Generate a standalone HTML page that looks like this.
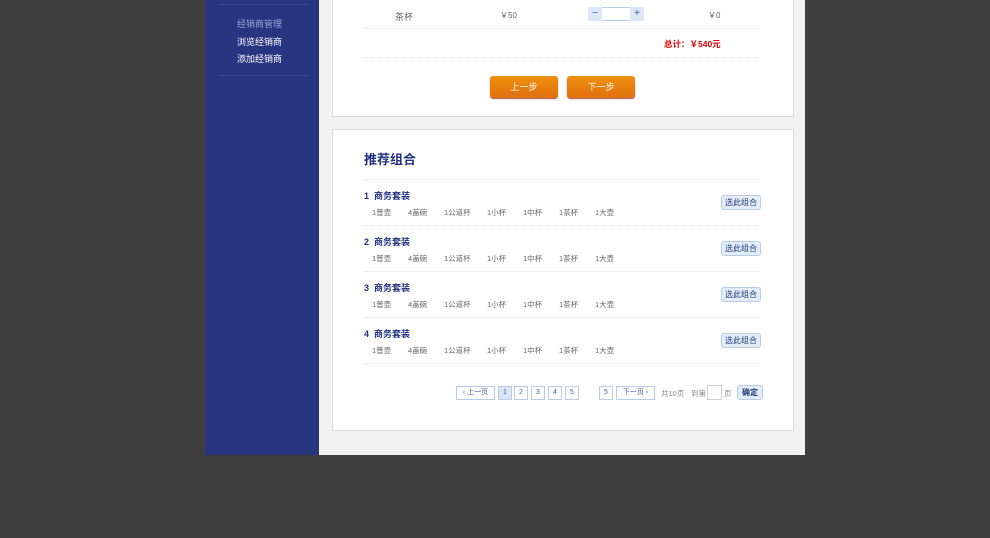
<!DOCTYPE html>
<html><head><meta charset="utf-8"><style>
*{margin:0;padding:0;box-sizing:border-box}
body{width:990px;height:538px;background:#3e3e3e;position:relative;overflow:hidden;font-family:"Liberation Sans","Noto Sans CJK SC",sans-serif;font-size:9px;color:#666}
.a{position:absolute;white-space:nowrap}
#side{left:205px;top:0;width:114px;height:455px;background:#283581}
#main{left:319px;top:0;width:486px;height:455px;background:#f2f2f2}
.panel{position:absolute;background:#fff;border:1px solid #dcdcdc}
.hl{position:absolute;height:0;border-top:1px dotted #e2e2e2}
.btn{position:absolute;width:68px;height:22px;border-radius:3px;background:linear-gradient(#f0900e,#e0700f);color:#fff;font-size:9px;text-align:center;line-height:22px;box-shadow:0 1px 1px #a55}
.sel{position:absolute;left:721px;width:40px;height:15px;border:1px solid #b9cbe6;border-radius:3px;background:#e3ecf9;color:#223a7a;font-size:8px;text-align:center;line-height:13px}
.pg{position:absolute;top:386px;height:14px;border:1px solid #b9cbe6;color:#4060a0;font-size:7px;text-align:center;line-height:12px;background:#fff}
.t{color:#1f2e80;font-weight:bold;font-size:9px}
.row{position:absolute;left:0;width:990px;height:10px}
.row span{position:absolute;font-size:7.5px;color:#666;white-space:nowrap}
</style></head><body>
<div class="a" id="side"></div>
<div class="hl" style="left:218px;top:4px;width:90px;border-top:1px solid #3b4a98"></div>
<div class="a" style="left:237px;top:17px;color:#9aa6d6;font-size:9px">经销商管理</div>
<div class="a" style="left:237px;top:35px;color:#fff;font-size:9px">浏览经销商</div>
<div class="a" style="left:237px;top:52px;color:#fff;font-size:9px">添加经销商</div>
<div class="hl" style="left:218px;top:75px;width:90px;border-top:1px solid #3b4a98"></div>
<div class="a" id="main"></div>
<div class="panel" style="left:332px;top:-2px;width:462px;height:119px"></div>
<div class="a" style="left:395px;top:10px">茶杯</div>
<div class="a" style="left:500px;top:10px;font-size:8px">￥50</div>
<div class="a" style="left:588px;top:7px;width:56px;height:14px;border:1px solid #b9cbe6;background:#fff"></div>
<div class="a" style="left:588px;top:7px;width:14px;height:14px;background:#dbe6f6;color:#4060a0;text-align:center;line-height:13px;font-size:10px">−</div>
<div class="a" style="left:630px;top:7px;width:14px;height:14px;background:#dbe6f6;color:#4060a0;text-align:center;line-height:13px;font-size:10px">+</div>
<div class="a" style="left:708px;top:10px;font-size:8px">￥0</div>
<div class="hl" style="left:364px;top:28px;width:396px"></div>
<div class="a" style="left:664px;top:38px;color:#d00;font-weight:bold;font-size:8.5px">总计：￥540元</div>
<div class="hl" style="left:364px;top:57px;width:396px"></div>
<div class="btn" style="left:490px;top:76px">上一步</div>
<div class="btn" style="left:567px;top:76px">下一步</div>
<div class="panel" style="left:332px;top:129px;width:462px;height:302px"></div>
<div class="a" style="left:364px;top:149px;color:#1f2e80;font-weight:bold;font-size:13px">推荐组合</div>
<div class="hl" style="left:364px;top:179px;width:396px"></div>

<div class="a t" style="left:364px;top:189px">1&nbsp; 商务套装</div>
<div class="row" style="top:207px"><span style="left:372px">1普壶</span><span style="left:408px">4盖碗</span><span style="left:444px">1公道杯</span><span style="left:487px">1小杯</span><span style="left:523px">1中杯</span><span style="left:559px">1茶杯</span><span style="left:595px">1大壶</span></div>
<div class="sel" style="top:195px">选此组合</div>
<div class="hl" style="left:364px;top:225px;width:396px"></div>

<div class="a t" style="left:364px;top:235px">2&nbsp; 商务套装</div>
<div class="row" style="top:253px"><span style="left:372px">1普壶</span><span style="left:408px">4盖碗</span><span style="left:444px">1公道杯</span><span style="left:487px">1小杯</span><span style="left:523px">1中杯</span><span style="left:559px">1茶杯</span><span style="left:595px">1大壶</span></div>
<div class="sel" style="top:241px">选此组合</div>
<div class="hl" style="left:364px;top:271px;width:396px"></div>

<div class="a t" style="left:364px;top:281px">3&nbsp; 商务套装</div>
<div class="row" style="top:299px"><span style="left:372px">1普壶</span><span style="left:408px">4盖碗</span><span style="left:444px">1公道杯</span><span style="left:487px">1小杯</span><span style="left:523px">1中杯</span><span style="left:559px">1茶杯</span><span style="left:595px">1大壶</span></div>
<div class="sel" style="top:287px">选此组合</div>
<div class="hl" style="left:364px;top:317px;width:396px"></div>

<div class="a t" style="left:364px;top:327px">4&nbsp; 商务套装</div>
<div class="row" style="top:345px"><span style="left:372px">1普壶</span><span style="left:408px">4盖碗</span><span style="left:444px">1公道杯</span><span style="left:487px">1小杯</span><span style="left:523px">1中杯</span><span style="left:559px">1茶杯</span><span style="left:595px">1大壶</span></div>
<div class="sel" style="top:333px">选此组合</div>
<div class="hl" style="left:364px;top:363px;width:396px"></div>

<div class="pg" style="left:456px;width:39px">‹ 上一页</div>
<div class="pg" style="left:498px;width:14px;background:#dbe6f6">1</div>
<div class="pg" style="left:514px;width:14px">2</div>
<div class="pg" style="left:531px;width:14px">3</div>
<div class="pg" style="left:548px;width:14px">4</div>
<div class="pg" style="left:565px;width:14px">5</div>
<div class="pg" style="left:599px;width:14px">5</div>
<div class="pg" style="left:616px;width:39px">下一页 ›</div>
<div class="a" style="left:661px;top:388px;font-size:7.5px;color:#888">共10页</div>
<div class="a" style="left:691px;top:388px;font-size:7.5px;color:#888">到第</div>
<div class="a" style="left:707px;top:385px;width:15px;height:15px;border:1px solid #ccd;background:#fff"></div>
<div class="a" style="left:724px;top:388px;font-size:7.5px;color:#888">页</div>
<div class="sel" style="left:737px;top:385px;width:26px;font-weight:bold">确定</div>
</body></html>
